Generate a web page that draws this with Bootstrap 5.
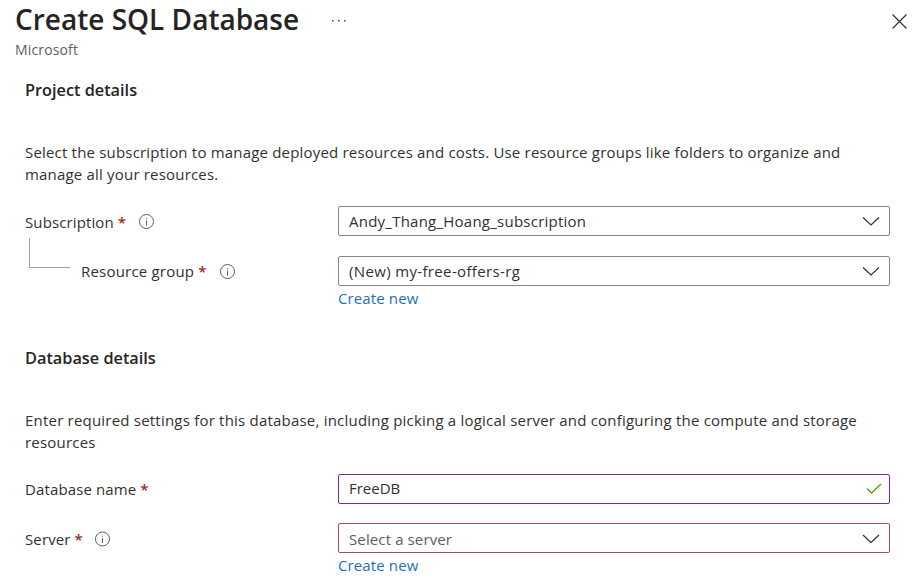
<!DOCTYPE html>
<html lang="en">
<head>
<meta charset="utf-8">
<meta name="viewport" content="width=device-width, initial-scale=1">
<title>Create SQL Database</title>
<link href="https://cdn.jsdelivr.net/npm/bootstrap@5.3.0/dist/css/bootstrap.min.css" rel="stylesheet">
<style>
body{font-family:"Open Sans","Noto Sans",sans-serif;font-size:15px;line-height:22px;color:#323130;background:#fff;overflow:hidden}
.page-head{height:62px;padding:0 5px 0 15px}
.page-title{font-size:28px;line-height:36px;font-weight:600;color:#252423;margin:1px 0 0;white-space:nowrap}
.publisher{font-size:14px;line-height:20px;color:#605e5c;margin-top:3px;letter-spacing:.15px}
.more-dots{margin:19px 0 0 33px}
.close-btn{margin-top:13px;line-height:0}
.form-body{padding:16px 23px 0 25px}
.section-title{font-size:16.3px;line-height:24px;font-weight:600;color:#252423;margin:0;white-space:nowrap}
.section-gap{margin-top:37px}
.section-text{margin:39px 0 0;padding-bottom:1px;white-space:nowrap;letter-spacing:.187px}
.text-wide{letter-spacing:.21px}
.field-row{margin-top:20px}
.row-tight{margin-top:19px}
.field-label{width:313px;height:30px;padding-top:2px;white-space:nowrap;letter-spacing:.12px}
.label-high{padding-top:0}
.req{color:#a4262c;font-weight:600;margin-left:4px}
.info{margin-left:12px}
.field-box{height:30px;border:1px solid #8a8886;border-radius:2px;padding:0 9px 0 10px;color:#323130;white-space:nowrap;letter-spacing:.24px}
.group-name{letter-spacing:.35px}
.db-name{letter-spacing:0;padding-bottom:2px}
.box-valid{border-color:#7a2f8f;padding-right:7px}
.box-error{border-color:#a8505a;color:#605e5c;letter-spacing:.12px}
.placeholder-text{padding-top:2px}
.new-link{color:#1f6fb8;text-decoration:none;line-height:22px;margin-top:1px;letter-spacing:.12px}
.elbow{width:41px;height:30px;border-left:1px solid #a19f9d;border-bottom:1px solid #a19f9d;margin:-18px 11px 0 4px}
.group-label{letter-spacing:.2px}
</style>
</head>
<body>
<header class="page-head d-flex align-items-start">
  <div>
    <h1 class="page-title">Create SQL Database</h1>
    <div class="publisher">Microsoft</div>
  </div>
  <svg class="more-dots" width="14" height="4" viewBox="0 0 14 4" fill="#444"><rect x="0" y="1" width="1.5" height="1.5"/><rect x="6" y="1" width="1.5" height="1.5"/><rect x="12" y="1" width="1.5" height="1.5"/></svg>
  <a class="close-btn ms-auto" href="#" aria-label="Close"><svg width="17" height="17" viewBox="0 0 17 17" fill="none" stroke="#323130" stroke-width="1.2"><path d="M1.500 1.500L15.500 15.500M15.500 1.500L1.500 15.500"/></svg></a>
</header>
<main class="form-body">
  <section>
    <h2 class="section-title">Project details</h2>
    <p class="section-text">Select the subscription to manage deployed resources and costs. Use resource groups like folders to organize and<br>manage all your resources.</p>
    <div class="field-row d-flex">
      <div class="field-label d-flex align-items-center"><span>Subscription</span><span class="req">*</span><svg class="info" width="16" height="16" viewBox="0 0 16 16" fill="none" stroke="#605e5c"><circle cx="8.500" cy="7.500" r="7"/><path d="M8.500 6.500v5M8.500 4v1.200"/></svg></div>
      <div class="field-box flex-grow-1 d-flex align-items-center justify-content-between"><span>Andy_Thang_Hoang_subscription</span><svg width="18" height="10" viewBox="0 0 18 10" fill="none" stroke="#323130" stroke-width="1.2"><path d="M1 1.500l8 7.500L17 1.500"/></svg></div>
    </div>
    <div class="field-row d-flex">
      <div class="field-label label-high d-flex align-items-center"><span class="elbow align-self-start"></span><span class="group-label">Resource group</span><span class="req">*</span><svg class="info" width="16" height="16" viewBox="0 0 16 16" fill="none" stroke="#605e5c"><circle cx="8.500" cy="8.500" r="7"/><path d="M8.500 7.500v5M8.500 5v1.200"/></svg></div>
      <div class="flex-grow-1">
        <div class="field-box d-flex align-items-center justify-content-between"><span class="group-name">(New) my-free-offers-rg</span><svg width="18" height="10" viewBox="0 0 18 10" fill="none" stroke="#323130" stroke-width="1.2"><path d="M1 1.500l8 7.500L17 1.500"/></svg></div>
        <a class="new-link d-block" href="#">Create new</a>
      </div>
    </div>
  </section>
  <section class="section-gap">
    <h2 class="section-title">Database details</h2>
    <p class="section-text text-wide">Enter required settings for this database, including picking a logical server and configuring the compute and storage<br>resources</p>
    <div class="field-row d-flex">
      <div class="field-label label-high d-flex align-items-center"><span>Database name</span><span class="req">*</span></div>
      <div class="field-box box-valid flex-grow-1 d-flex align-items-center justify-content-between"><span class="db-name">FreeDB</span><svg width="16" height="12" viewBox="0 0 16 12" fill="none" stroke="#57a300" stroke-width="1.4"><path d="M1 5.500l4.500 4.500L15 1"/></svg></div>
    </div>
    <div class="field-row row-tight d-flex">
      <div class="field-label d-flex align-items-center"><span>Server</span><span class="req">*</span><svg class="info" width="16" height="16" viewBox="0 0 16 16" fill="none" stroke="#605e5c"><circle cx="7.500" cy="8" r="7"/><path d="M7.500 7v5M7.500 4.500v1.200"/></svg></div>
      <div class="flex-grow-1">
        <div class="field-box box-error d-flex align-items-center justify-content-between"><span class="placeholder-text">Select a server</span><svg width="18" height="10" viewBox="0 0 18 10" fill="none" stroke="#323130" stroke-width="1.2"><path d="M1 2l8 7.500L17 2"/></svg></div>
        <a class="new-link d-block" href="#">Create new</a>
      </div>
    </div>
  </section>
</main>
<script src="https://cdn.jsdelivr.net/npm/bootstrap@5.3.0/dist/js/bootstrap.bundle.min.js"></script>
</body>
</html>
